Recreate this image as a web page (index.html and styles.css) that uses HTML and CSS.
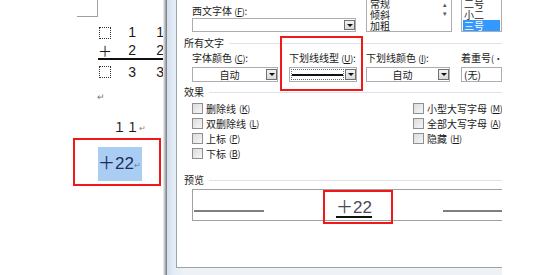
FILE: index.html
```html
<!DOCTYPE html>
<html lang="zh-CN">
<head>
  <meta charset="UTF-8">
  <title>字体</title>
  <link rel="stylesheet" href="styles.css">
</head>
<body>

  <div class="page">

    <!-- 文档区 -->
    <div class="doc">
      <div class="corner"></div>

      <div class="sum">
        <span class="c"><i class="ph"></i></span><span class="c n">1</span><span class="c n">1</span>
        <span class="c r2 plus">＋</span><span class="c r2 n">2</span><span class="c r2 n">2</span>
        <span class="c"><i class="ph"></i></span><span class="c n">3</span><span class="c n">3</span>
      </div>

      <div class="mark">↵</div>
      <div class="line11">１１<span class="ret">↵</span></div>

      <div class="red doc-red">
        <span class="sel">＋22<span class="ret">↵</span></span>
      </div>
    </div>

    <div class="shadow"></div>

    <!-- 字体对话框 -->
    <div class="frame">
      <div class="panel">

        <div class="top-row">
          <div class="latin">
            <div class="label">西文字体 <span class="k">(<u>F</u>)</span>:</div>
            <div class="combo wide"><span class="val"></span><span class="btn"></span></div>
          </div>
          <div class="list style-list">
            <div class="item">常规</div>
            <div class="item">倾斜</div>
            <div class="item">加粗</div>
            <div class="scroll"><span>▴</span><span>▾</span></div>
          </div>
          <div class="list size-list">
            <div class="item">二号</div>
            <div class="item">小二</div>
            <div class="item on">三号</div>
          </div>
        </div>

        <div class="group">所有文字<span class="rule"></span></div>
        <div class="fields">
          <div class="field f-color">
            <div class="label">字体颜色 <span class="k">(<u>C</u>)</span>:</div>
            <div class="combo"><span class="val">自动</span><span class="btn"></span></div>
          </div>
          <div class="field f-line red">
            <div class="label">下划线线型 <span class="k">(<u>U</u>)</span>:</div>
            <div class="combo"><span class="val focus"><i class="uline"></i></span><span class="btn"></span></div>
          </div>
          <div class="field f-ucolor">
            <div class="label">下划线颜色 <span class="k">(<u>I</u>)</span>:</div>
            <div class="combo"><span class="val">自动</span><span class="btn"></span></div>
          </div>
          <div class="field f-dot">
            <div class="label">着重号<span class="k">(·)</span></div>
            <div class="combo"><span class="val left">(无)</span></div>
          </div>
        </div>

        <div class="group">效果<span class="rule"></span></div>
        <div class="effects">
          <label class="chk"><i class="box"></i>删除线 <span class="k">(<u>K</u>)</span></label>
          <label class="chk"><i class="box"></i>小型大写字母 <span class="k">(<u>M</u>)</span></label>
          <label class="chk"><i class="box"></i>双删除线 <span class="k">(<u>L</u>)</span></label>
          <label class="chk"><i class="box"></i>全部大写字母 <span class="k">(<u>A</u>)</span></label>
          <label class="chk"><i class="box"></i>上标 <span class="k">(<u>P</u>)</span></label>
          <label class="chk"><i class="box"></i>隐藏 <span class="k">(<u>H</u>)</span></label>
          <label class="chk"><i class="box"></i>下标 <span class="k">(<u>B</u>)</span></label>
        </div>

        <div class="group preview-title">预览<span class="rule"></span></div>
        <div class="preview">
          <span class="pline"></span>
          <div class="red pv-red"><span class="pv-text">＋22</span></div>
          <span class="pline right"></span>
        </div>

      </div>
    </div>

  </div>

</body>
</html>
```

FILE: styles.css
```css
body {
  margin: 0;
  background-color: #fff;
  font-family: "Noto Sans CJK SC", sans-serif;
  color: #1a1a1a;
}

.page {
  display: flex;
  width: 533px;
  height: 275px;
  overflow: hidden;
}

/* 文档区 */
.doc {
  width: 163px;
  flex: none;
}

.corner {
  width: 20px;
  height: 16px;
  margin-left: 77px;
  border-right: 1px solid #a0a0a0;
  border-bottom: 1px solid #a0a0a0;
}

.sum {
  display: grid;
  grid-template-columns: 14px 24px 28px;
  grid-template-rows: 19px 18px 24px;
  margin: 6px 0 0 98px;
  font-family: "Liberation Sans", sans-serif;
  font-size: 14px;
  line-height: 19px;
}

.sum .c {
  display: flex;
  align-items: center;
}

.sum .n {
  justify-content: flex-end;
}

.sum .r2 {
  border-bottom: 2px solid #111;
}

.sum .plus {
  font-family: "Noto Sans CJK SC", sans-serif;
  font-size: 14px;
}

.ph {
  display: block;
  width: 10px;
  height: 10px;
  margin-left: 1px;
  border: 1px dotted #333;
}

.mark {
  margin: 6px 0 0 97px;
  font-size: 9px;
  line-height: 14px;
  color: #777;
}

.line11 {
  margin: 14px 0 0 113px;
  font-size: 13px;
  line-height: 18px;
}

.ret {
  font-size: 8px;
  color: #888;
  vertical-align: 1px;
}

.red {
  border: 2px solid #f01818;
}

.doc-red {
  box-sizing: border-box;
  width: 88px;
  height: 48px;
  margin: 1px 0 0 73px;
  padding: 7px 0 0 23px;
}

.sel {
  display: inline-block;
  height: 34px;
  padding-right: 1px;
  background-color: #a9cdf3;
  color: #1d2d5c;
  font-family: "Liberation Sans", "Noto Sans CJK SC", sans-serif;
  font-size: 17px;
  line-height: 34px;
}

.sel .ret {
  color: #6a7fa0;
}

.shadow {
  width: 3px;
  flex: none;
  background: linear-gradient(to right, #f4f4f4, #9a9a9a);
}

/* 对话框外框 */
.frame {
  width: 326px;
  height: 268px;
  flex: none;
  border-left: 1px solid #7d8690;
  padding: 0 0 7px 9px;
  background: linear-gradient(to right, #d3dfed, #e3ecf6 2%, #eef1f5 5%);
}

.panel {
  height: 268px;
  box-sizing: border-box;
  border-left: 1px solid #9ba3ab;
  border-bottom: 1px solid #9ba3ab;
  background-color: #fff;
  overflow: hidden;
  font-size: 10px;
  line-height: 12px;
}

.label {
  white-space: nowrap;
}

.k {
  font-size: 9px;
  letter-spacing: -0.3px;
}

u {
  text-decoration: underline;
  text-underline-offset: 1px;
}

/* 第一行 */
.top-row {
  display: flex;
  height: 33px;
}

.latin {
  width: 164px;
  flex: none;
  margin-left: 15px;
  padding-top: 4px;
}

.latin .label {
  line-height: 13px;
}

.combo {
  display: flex;
  height: 15px;
  box-sizing: border-box;
  border: 1px solid #abadb3;
  background-color: #fff;
}

.combo.wide {
  height: 14px;
}

.combo .val {
  flex: 1;
  text-align: center;
  line-height: 13px;
}

.combo .val.left {
  text-align: left;
  padding-left: 2px;
}

.combo .btn {
  width: 11px;
  flex: none;
  margin: 1px 0;
  box-sizing: border-box;
  border: 1px solid #707070;
  background: linear-gradient(#f3f3f3, #d8d8d8);
  display: flex;
  align-items: center;
  justify-content: center;
}

.combo .btn::after {
  content: "";
  border-left: 3px solid transparent;
  border-right: 3px solid transparent;
  border-top: 3px solid #111;
}

.list {
  position: relative;
  flex: none;
  margin-top: -3px;
  height: 35px;
  box-sizing: border-box;
  border: 1px solid #abadb3;
  font-size: 10px;
  line-height: 11px;
}

.style-list {
  width: 86px;
  margin-left: 10px;
  padding-left: 2px;
}

.size-list {
  width: 41px;
  margin-left: 9px;
  padding: 0 1px;
}

.list .item {
  height: 11px;
  padding-left: 1px;
}

.list .item.on {
  background-color: #3399ff;
  color: #fff;
}

.scroll {
  position: absolute;
  top: 2px;
  right: 1px;
  width: 10px;
  display: flex;
  flex-direction: column;
  align-items: center;
  font-size: 7px;
  line-height: 9px;
  color: #555;
}

/* 分组标题 */
.group {
  display: flex;
  align-items: center;
  margin: 4px 0 0 7px;
  line-height: 12px;
}

.group .rule {
  flex: 1;
  height: 1px;
  margin-left: 5px;
  background-color: #dde3ea;
}

.fields {
  display: flex;
  gap: 9px;
  margin: 3px 0 0 15px;
}

.field {
  flex: none;
}

.field .label {
  line-height: 12px;
  margin-bottom: 2px;
}

.f-color { width: 86px; }
.f-ucolor { width: 84px; }
.f-dot { width: 41px; margin-left: 2px; }

.f-line {
  width: 70px;
  margin: -16px -6px -9px -7px;
  padding: 14px 4px 7px 5px;
}

.f-line .label,
.f-line .combo {
  margin-left: 2px;
}

.val.focus {
  display: flex;
  align-items: center;
  margin: 1px;
  border: 1px dotted #5a6a80;
}

.uline {
  display: block;
  flex: 1;
  height: 2px;
  background-color: #111;
}

/* 效果 */
.effects {
  display: grid;
  grid-template-columns: 221px auto;
  grid-auto-rows: 15px;
  margin: 3px 0 0 15px;
}

.chk {
  display: flex;
  align-items: center;
  white-space: nowrap;
}

.chk .box {
  width: 11px;
  height: 11px;
  flex: none;
  box-sizing: border-box;
  margin-right: 3px;
  border: 1px solid #8e8f8f;
  background: linear-gradient(135deg, #dcdcdc, #f6f6f6);
}

.chk .k {
  margin-left: 3px;
}

.preview-title {
  margin-top: 13px;
}

.preview {
  display: flex;
  align-items: flex-start;
  width: 325px;
  height: 32px;
  box-sizing: border-box;
  margin: 3px 0 0 15px;
  border: 1px solid #a0a0a0;
}

.pline {
  width: 70px;
  height: 2px;
  flex: none;
  align-self: flex-end;
  margin: 0 0 8px 1px;
  background-color: #7f7f7f;
}

.pline.right {
  margin-left: 50px;
}

.pv-red {
  width: 70px;
  height: 34px;
  flex: none;
  box-sizing: border-box;
  margin: 0 0 0 59px;
  padding: 7px 0 0 11px;
}

.pv-text {
  display: inline-block;
  border-bottom: 2px solid #111;
  color: #4a4a55;
  font-family: "Liberation Sans", "Noto Sans CJK SC", sans-serif;
  font-size: 17px;
  line-height: 17px;
}
```
